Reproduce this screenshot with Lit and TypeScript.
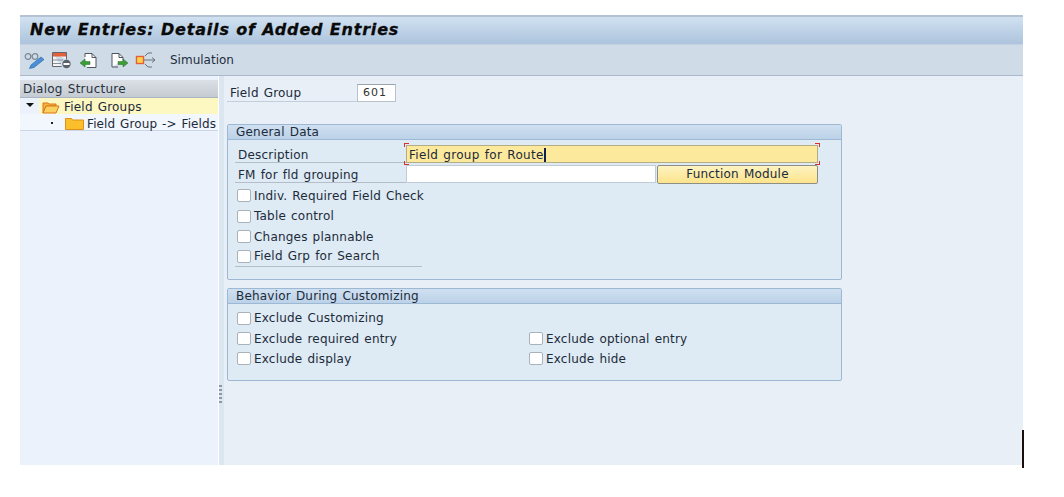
import { LitElement, html, css } from "lit";
import { customElement } from "lit/decorators.js";

@customElement("app-root")
export class AppRoot extends LitElement {
  static styles = css`
    :host { display: block; position: relative; width: 1064px; height: 497px; background: #fff; font-family: "DejaVu Sans", sans-serif; font-size: 12px; letter-spacing: .2px; word-spacing: 1px; color: #1c2a3a; overflow: hidden; }
    .window { margin: 15px 0 0 20px; width: 1003px; height: 450px; display: flex; flex-direction: column; background: #e8eff7; }
    .title { height: 30px; box-sizing: border-box; border-top: 2px solid #b4c2d4; border-bottom: 1px solid #c3d3e4; background: linear-gradient(#d0e1f1, #adc4dd); padding: 0 0 2px 10px; display: flex; align-items: center; font-size: 16px; letter-spacing: .82px; word-spacing: 0; font-weight: bold; font-style: italic; color: #0a0a0a; white-space: nowrap; -webkit-text-stroke: .3px #0a0a0a; }
    .toolbar { height: 31px; box-sizing: border-box; background: #cfdce8; border-bottom: 1px solid #a8b9cb; display: flex; align-items: center; padding-left: 3px; gap: 4px; }
    .toolbar svg { display: block; }
    .tool { width: 23px; height: 18px; flex: none; }
    .sim { margin-left: 8px; color: #1f2d3d; letter-spacing: 0; word-spacing: 0; }
    .body { flex: 1; display: flex; min-height: 0; }
    .left { width: 198px; background: #ebf2fb; padding-top: 4px; }
    .ds { height: 18px; box-sizing: border-box; background: linear-gradient(#dbe0e6, #c5cbd2); border-bottom: 1px solid #aab4c0; padding-left: 3px; line-height: 19px; letter-spacing: .25px; color: #26323f; }
    .node { display: flex; align-items: center; white-space: nowrap; box-sizing: border-box; padding-top: 2px; }
    .node.sel { background: linear-gradient(90deg, #ebf2fb 0, #ebf2fb 19px, #fdf7c2 19px); height: 16px; }
    .node.child { background: #f2f7fd; border-bottom: 1px solid #c9d7e6; height: 17px; padding-top: 3px; letter-spacing: .1px; }
    .arrow { width: 0; height: 0; border-left: 4px solid transparent; border-right: 4px solid transparent; border-top: 4px solid #111; margin: 0 8px 4px 6px; }
    .dot { width: 2px; height: 2px; background: #222; margin: 0 12px 2px 31px; }
    .node svg { margin-right: 4px; }
    .node.child svg { margin-right: 3px; }
    .splitter { width: 5px; border-left: 1px solid #fff; background: #dbe6f0; display: flex; flex-direction: column; align-items: flex-start; gap: 2px; padding-top: 309px; box-sizing: content-box; }
    .splitter i { width: 3px; height: 2px; background: #8a98a8; display: block; }
    .main { flex: 1; padding: 8px 0 0 1px; }
    .fg-row { display: flex; align-items: flex-start; height: 40px; }
    .fg-label { width: 130px; height: 18px; margin-left: 2px; border-bottom: 1px solid #c3cedb; padding-left: 3px; box-sizing: border-box; line-height: 18px; }
    .fg-input { width: 39px; height: 18px; box-sizing: border-box; background: #fff; border: 1px solid #b9c2cc; border-top-color: #9aa4af; font-size: 11px; line-height: 16px; padding-left: 5px; letter-spacing: 1px; color: #333; }
    .group { margin-left: 2px; width: 615px; box-sizing: border-box; background: #deeaf4; border: 1px solid #9db8d2; border-radius: 2px; margin-bottom: 8px; }
    .group.g1 { height: 156px; }
    .group.g2 { height: 93px; }
    .ghead { height: 15px; box-sizing: border-box; background: linear-gradient(#cfe0f1, #bcd2e8); border-bottom: 1px solid #9db8d2; padding-left: 8px; line-height: 14px; }
    .gbody { padding: 5px 0 0 7px; }
    .g2 .gbody { padding-top: 4px; }
    .frow { display: flex; align-items: flex-start; }
    .frow.second { margin-top: 2px; }
    .flabel { width: 171px; height: 18px; box-sizing: border-box; border-bottom: 1px solid #b5bec8; padding-left: 3px; line-height: 20px; flex: none; }
    .desc { position: relative; width: 412px; height: 18px; box-sizing: border-box; background: #fde99c; border: 1px solid #b3ac85; line-height: 18px; padding-left: 2px; white-space: nowrap; letter-spacing: .3px; }
    .caret { display: inline-block; width: 1px; height: 14px; background: #10204a; vertical-align: -3px; border-right: 1px solid #10204a; }
    .mk { position: absolute; width: 4px; height: 3px; }
    .mk.tl { left: -3px; top: -3px; border-left: 1px solid #d8302a; border-top: 1px solid #d8302a; }
    .mk.bl { left: -3px; bottom: -3px; border-left: 1px solid #d8302a; border-bottom: 1px solid #d8302a; }
    .mk.tr { right: -3px; top: -3px; border-right: 1px solid #d8302a; border-top: 1px solid #d8302a; }
    .mk.br { right: -3px; bottom: -3px; border-right: 1px solid #d8302a; border-bottom: 1px solid #d8302a; }
    .fm { width: 250px; height: 18px; box-sizing: border-box; background: #fff; border: 1px solid #c2ccd6; flex: none; }
    .btn { width: 161px; height: 19px; box-sizing: border-box; margin-left: 1px; background: linear-gradient(#fdf3c0, #fde48c); border: 1px solid #8d8f86; border-radius: 2px; text-align: center; line-height: 17px; color: #1c2a3a; flex: none; }
    .checks { margin-top: 1.6px; }
    .chk { height: 20.4px; display: flex; align-items: center; white-space: nowrap; }
    .chk span { display: block; }
    .box { width: 14px; height: 13px; box-sizing: border-box; background: #fff; border: 1px solid #a9b1ba; border-radius: 2px; margin: 0 3px 0 2px; flex: none; }
    .last { width: 187px; border-bottom: 1px solid #b5bec8; height: 19px; }
    .cols { display: flex; }
    .cols > div { width: 292px; flex: none; }
    .mark { position: absolute; left: 1022px; top: 430px; width: 2px; height: 38px; background: #1a0f0a; }
  `;

  private check(label: string, cls = "") {
    return html`<div class="chk ${cls}"><div class="box"></div><span>${label}</span></div>`;
  }

  render() {
    return html`
      <div class="window">
        <div class="title">New Entries: Details of Added Entries</div>
        <div class="toolbar">
          <svg class="tool" viewBox="0 0 23 18">
            <circle cx="5" cy="5.500" r="2.800" fill="none" stroke="#7d8894" stroke-width="1.200"/>
            <circle cx="12" cy="5.500" r="2.800" fill="none" stroke="#7d8894" stroke-width="1.200"/>
            <path d="M7.800 5h1.400" stroke="#7d8894"/>
            <path d="M8 14l10-8 3 2.500-10 8-4.500 1z" fill="#4a90d6" stroke="#24619f" stroke-width=".6"/>
          </svg>
          <svg class="tool" viewBox="0 0 23 18">
            <path d="M2.500 1.500h14v7M2.500 1.500v14h9" fill="#f4f4f4" stroke="#5f666e"/>
            <rect x="3" y="2" width="13" height="3.500" fill="#e2603a"/>
            <path d="M3 9h10M3 12.500h8" stroke="#8a9099"/>
            <circle cx="16.500" cy="13" r="4.200" fill="#59616a"/><rect x="13.500" y="12" width="6" height="2" fill="#fff"/>
          </svg>
          <svg class="tool" viewBox="0 0 23 18">
            <path d="M8 6V2.500h7l4 4v10h-9" fill="#fff" stroke="#4e555d"/>
            <path d="M15 2.500v4h4" fill="none" stroke="#4e555d"/>
            <path d="M3 12l5-4v2.500h5v3H8V16z" fill="#3e9c3a" stroke="#256f26" stroke-width=".5"/>
          </svg>
          <svg class="tool" viewBox="0 0 23 18" style="margin-left:4px">
            <path d="M4 16V2.500h7l4 4v3M4 16h6" fill="#fff" stroke="#4e555d"/>
            <path d="M11 2.500v4h4" fill="none" stroke="#4e555d"/>
            <path d="M20 12l-5-4v2.500h-5v3h5V16z" fill="#3e9c3a" stroke="#256f26" stroke-width=".5"/>
          </svg>
          <svg class="tool" viewBox="0 0 23 18">
            <rect x="1.500" y="5.500" width="7" height="7" fill="#fbd24d" stroke="#e2603a" stroke-width="1.400"/>
            <path d="M9 9h11M17 6.500L20 9l-3 2.500M10 5l3-3h4M10 13l3 3h4" fill="none" stroke="#6a727b"/>
          </svg>
          <span class="sim">Simulation</span>
        </div>
        <div class="body">
          <div class="left">
            <div class="ds">Dialog Structure</div>
            <div class="node sel">
              <span class="arrow"></span>
              <svg width="18" height="13" viewBox="0 0 18 13"><path d="M1 12V2h5l1 1h7v2H4z" fill="#f5b53a" stroke="#d9771c"/><path d="M1 12l3-7h13l-3 7z" fill="#fbd05f" stroke="#d9771c"/></svg>
              <span>Field Groups</span>
            </div>
            <div class="node child">
              <span class="dot"></span>
              <svg width="19" height="13" viewBox="0 0 19 13"><path d="M.5 12.500V1.500h6l1 1.500h11v9.500z" fill="#fbbf2c" stroke="#e0901a"/></svg>
              <span>Field Group -&gt; Fields</span>
            </div>
          </div>
          <div class="splitter"><i></i><i></i><i></i><i></i><i></i></div>
          <div class="main">
            <div class="fg-row">
              <div class="fg-label">Field Group</div>
              <div class="fg-input">601</div>
            </div>
            <div class="group g1">
              <div class="ghead">General Data</div>
              <div class="gbody">
                <div class="frow">
                  <div class="flabel">Description</div>
                  <div class="desc">Field group for Route<span class="caret"></span><i class="mk tl"></i><i class="mk bl"></i><i class="mk tr"></i><i class="mk br"></i></div>
                </div>
                <div class="frow second">
                  <div class="flabel">FM for fld grouping</div>
                  <div class="fm"></div>
                  <div class="btn">Function Module</div>
                </div>
                <div class="checks">
                  ${this.check("Indiv. Required Field Check")}
                  ${this.check("Table control")}
                  ${this.check("Changes plannable")}
                  ${this.check("Field Grp for Search", "last")}
                </div>
              </div>
            </div>
            <div class="group g2">
              <div class="ghead">Behavior During Customizing</div>
              <div class="gbody">
                ${this.check("Exclude Customizing")}
                <div class="cols"><div>${this.check("Exclude required entry")}</div><div>${this.check("Exclude optional entry")}</div></div>
                <div class="cols"><div>${this.check("Exclude display")}</div><div>${this.check("Exclude hide")}</div></div>
              </div>
            </div>
          </div>
        </div>
      </div>
      <div class="mark"></div>
    `;
  }
}
